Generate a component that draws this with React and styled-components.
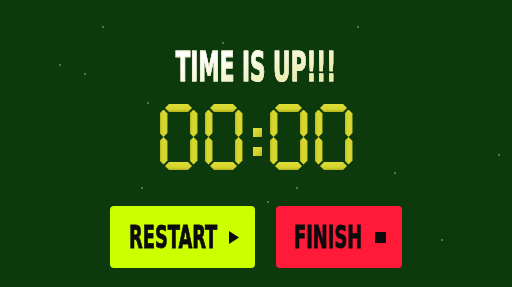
import React from "react";
import styled, {createGlobalStyle} from "styled-components";

const stars = [
  [103, 27], [358, 27], [223, 43], [85, 74], [60, 65], [148, 103],
  [499, 155], [142, 188], [297, 188], [268, 202], [442, 240], [395, 173],
];

const GlobalStyle = createGlobalStyle`
  html, body {
    margin: 0;
    padding: 0;
  }
  body {
    background-color: #0c3a0c;
    background-image: ${stars
      .map(
        ([x, y]) =>
          `radial-gradient(circle at ${x}px ${y}px, rgba(190, 220, 190, 0.45) 0.6px, transparent 1.3px)`
      )
      .join(", ")};
    background-repeat: no-repeat;
    font-family: "DejaVu Sans Condensed", "DejaVu Sans", sans-serif;
  }
`;

// lit segments for each digit
const SEGMENTS = {
  0: ["a", "b", "c", "d", "e", "f"],
  1: ["b", "c"],
  2: ["a", "b", "g", "e", "d"],
  3: ["a", "b", "g", "c", "d"],
  4: ["f", "g", "b", "c"],
  5: ["a", "f", "g", "c", "d"],
  6: ["a", "f", "g", "e", "c", "d"],
  7: ["a", "b", "c"],
  8: ["a", "b", "c", "d", "e", "f", "g"],
  9: ["a", "b", "c", "d", "f", "g"],
};

// grid-area "row / column" inside a digit
const AREA = {
  a: "1 / 2",
  b: "2 / 3",
  c: "4 / 3",
  d: "5 / 2",
  e: "4 / 1",
  f: "2 / 1",
  g: "3 / 2",
};

const Page = styled.main`
  min-height: 100vh;
  box-sizing: border-box;
  padding-top: 47px;
  display: flex;
  flex-direction: column;
  align-items: center;
`;

const Title = styled.h1`
  margin: 0;
  display: inline-block;
  font-size: 40px;
  line-height: 40px;
  font-weight: 700;
  white-space: nowrap;
  transform: scaleX(0.6);
  background: linear-gradient(170deg, #ffffff 25%, #f2f2c4 60%, #e6e68e 100%);
  -webkit-background-clip: text;
  background-clip: text;
  color: transparent;
  -webkit-text-stroke: 0.8px #f6f6d2;
`;

const Clock = styled.div`
  margin-top: 17px;
  display: flex;
  gap: 7px;
`;

const Digit = styled.div`
  width: 38px;
  height: 66px;
  display: grid;
  grid-template-columns: 8px 1fr 8px;
  grid-template-rows: 8px 1fr 5px 1fr 8px;
`;

const Segment = styled.span`
  grid-area: ${({$area}) => $area};
  background: ${({$horizontal}) =>
    $horizontal
      ? "linear-gradient(180deg, #dede36 0%, #d4d42c 65%, #b2b21e 100%)"
      : "linear-gradient(90deg, #b8b820 0%, #d4d42c 25%, #d8d830 75%, #c0c024 100%)"};
  ${({$horizontal}) =>
    $horizontal
      ? `
    margin: 0 -2.5px;
    clip-path: polygon(0 50%, 4px 0, calc(100% - 4px) 0, 100% 50%, calc(100% - 4px) 100%, 4px 100%);
  `
      : `
    margin: -2.5px 0;
    clip-path: polygon(50% 0, 100% 4px, 100% calc(100% - 4px), 50% 100%, 0 calc(100% - 4px), 0 4px);
  `}
`;

const Colon = styled.div`
  margin: 0 1px 0 3px;
  padding-top: 24px;
  display: flex;
  flex-direction: column;
  gap: 10px;
`;

const Dot = styled.span`
  width: 9px;
  height: 9px;
  background: linear-gradient(135deg, #e0e03a 0%, #d2d22c 60%, #b2b21e 100%);
`;

const Actions = styled.div`
  margin-top: 36px;
  display: flex;
  gap: 21px;
`;

const Button = styled.button`
  width: ${({$width}) => $width}px;
  height: 62px;
  box-sizing: border-box;
  padding: 0 16px 0 ${({$padLeft}) => $padLeft}px;
  display: grid;
  grid-template-columns: minmax(0, 1fr) auto;
  align-items: center;
  border: none;
  border-radius: 4px;
  background: ${({$bg}) => $bg};
  color: #0b0b0b;
  font-family: inherit;
  cursor: pointer;
`;

const Label = styled.span`
  display: block;
  font-size: 32px;
  line-height: 32px;
  font-weight: 700;
  white-space: nowrap;
  text-align: left;
  transform: scaleX(0.62);
  transform-origin: left center;
  -webkit-text-stroke: 0.8px #0b0b0b;
`;

const DigitBox = ({value}) => (
  <Digit>
    {SEGMENTS[value].map((s) => (
      <Segment key={s} $area={AREA[s]} $horizontal={s === "a" || s === "d" || s === "g"} />
    ))}
  </Digit>
);

const App = () => {
  const time = "00:00";
  const [mm, ss] = time.split(":");

  return (
    <>
      <GlobalStyle />
      <Page>
        <Title>TIME IS UP!!!</Title>

        <Clock role="timer" aria-label={time}>
          <DigitBox value={mm[0]} />
          <DigitBox value={mm[1]} />
          <Colon>
            <Dot />
            <Dot />
          </Colon>
          <DigitBox value={ss[0]} />
          <DigitBox value={ss[1]} />
        </Clock>

        <Actions>
          <Button $width={145} $padLeft={19} $bg="#ccff00">
            <Label>RESTART</Label>
            <svg width="10" height="13" viewBox="0 0 10 13">
              <polygon points="0,0 10,6.5 0,13" fill="#0b0b0b" />
            </svg>
          </Button>
          <Button $width={126} $padLeft={18} $bg="#ff1a3a">
            <Label>FINISH</Label>
            <svg width="11" height="11" viewBox="0 0 11 11">
              <rect x="0" y="0" width="11" height="11" rx="1" fill="#0b0b0b" />
            </svg>
          </Button>
        </Actions>
      </Page>
    </>
  );
};

export default App;
